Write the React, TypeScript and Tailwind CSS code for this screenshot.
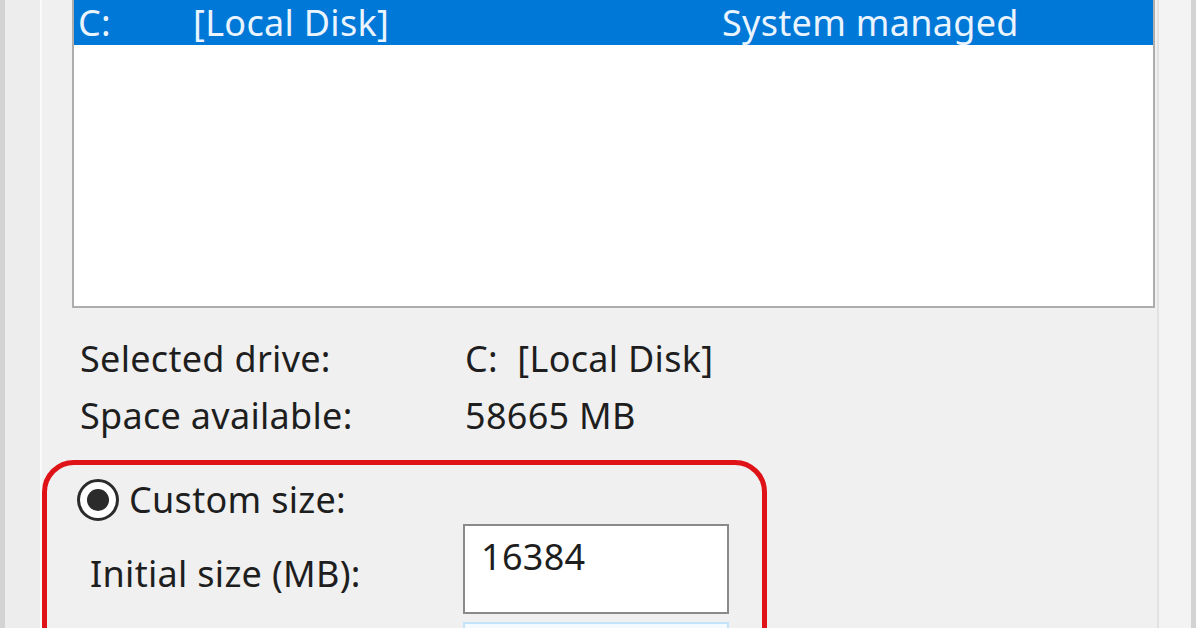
export default function App() {
  const font = { fontFamily: '"Noto Sans", "Open Sans", sans-serif' };
  return (
    <div
      className="flex h-[628px] w-[1196px] overflow-hidden bg-[#f0f0f0] text-[36px] leading-none tracking-[0.3px] text-[#1e1e1e]"
      style={font}
    >
      <div className="w-[5px] shrink-0 bg-[#d3d3d3]" />
      <div className="w-[35px] shrink-0 bg-[#ededed]" />
      <div className="flex w-[1119px] shrink-0 flex-col border-x-2 border-l-[#fafafa] border-r-[#e2e2e2]">
        {/* Drive list */}
        <div className="ml-[30px] h-[308px] w-[1083px] shrink-0 border-x-2 border-b-2 border-[#adadad] bg-white">
          <div className="flex h-[45px] items-center bg-[#0078d7] leading-[45px] text-[#eaf4ff]">
            <span className="w-[119px] pl-[4px]">C:</span>
            <span className="w-[529px]">[Local Disk]</span>
            <span>System managed</span>
          </div>
        </div>

        {/* Drive info */}
        <div className="mt-[22px] flex flex-col">
          <div className="flex h-[57px] items-center pl-[38px]">
            <span className="w-[385px]">Selected drive:</span>
            <span>C:&nbsp; [Local Disk]</span>
          </div>
          <div className="flex h-[57px] items-center pl-[38px]">
            <span className="w-[385px]">Space available:</span>
            <span>58665 MB</span>
          </div>
        </div>

        {/* Highlighted custom size group */}
        <div className="mt-[16px] h-[220px] w-[725px] shrink-0 rounded-[32px] border-[5px] border-[#df1218]">
          <div className="flex h-[59px] items-center gap-[10px] pl-[30px] pt-[10px]">
            <span className="flex h-[42px] w-[42px] items-center justify-center rounded-full border-[3px] border-[#2b2b2b] bg-white">
              <span className="h-[22px] w-[22px] rounded-full bg-[#2b2b2b]" />
            </span>
            <span>Custom size:</span>
          </div>
          <div className="flex items-start pl-[43px]">
            <span className="mt-[32px] w-[373px]">Initial size (MB):</span>
            <div className="flex flex-col gap-[8px]">
              <div className="h-[90px] w-[266px] border-2 border-[#8a8a8a] bg-white pl-[16px] pt-[13px]">
                16384
              </div>
              <div className="h-[90px] w-[266px] border-2 border-[#c4e4f9] bg-[#f4fafe]" />
            </div>
          </div>
        </div>
      </div>
      <div className="w-[32px] shrink-0 bg-[#f3f3f3]" />
      <div className="w-[5px] shrink-0 bg-[#d3d3d3]" />
    </div>
  );
}
